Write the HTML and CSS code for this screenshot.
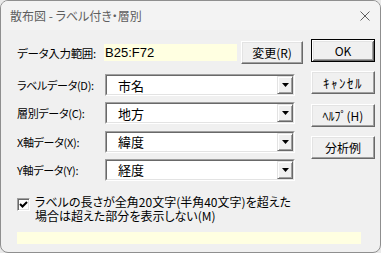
FILE: index.html
```html
<!DOCTYPE html>
<html lang="ja">
<head>
    <meta charset="UTF-8">
    <meta name="viewport" content="width=device-width, initial-scale=1.0">
    <title>散布図 - ラベル付き・層別</title>
    <link rel="stylesheet" href="styles.css">
</head>
<body>
    <div class="window">
        <div class="titlebar">
            <span class="title">散布図 - ラベル付き・層別</span>
            <svg class="close" width="10" height="10" viewBox="0 0 10 10">
                <path d="M0.5 0.5 L9.5 9.5 M9.5 0.5 L0.5 9.5" stroke="#5f5f5f" stroke-width="1" fill="none"/>
            </svg>
        </div>
        <div class="content">
            <div class="main">
                <div class="form">
                    <div class="range-row">
                        <span class="label range-label">データ入力範囲:</span>
                        <div class="range-field">B25:F72</div>
                        <button class="btn btn-change">変更(R)</button>
                    </div>
                    <div class="combo-row first">
                        <span class="label">ラベルデータ(D):</span>
                        <div class="combo">
                            <div class="combo-inner">
                                <span class="combo-text">市名</span>
                                <span class="combo-btn"><svg width="7" height="4" viewBox="0 0 7 4"><path d="M0 0h7l-3.5 4z" fill="#000"/></svg></span>
                            </div>
                        </div>
                    </div>
                    <div class="combo-row">
                        <span class="label">層別データ(C):</span>
                        <div class="combo">
                            <div class="combo-inner">
                                <span class="combo-text">地方</span>
                                <span class="combo-btn"><svg width="7" height="4" viewBox="0 0 7 4"><path d="M0 0h7l-3.5 4z" fill="#000"/></svg></span>
                            </div>
                        </div>
                    </div>
                    <div class="combo-row">
                        <span class="label">X軸データ(X):</span>
                        <div class="combo">
                            <div class="combo-inner">
                                <span class="combo-text">緯度</span>
                                <span class="combo-btn"><svg width="7" height="4" viewBox="0 0 7 4"><path d="M0 0h7l-3.5 4z" fill="#000"/></svg></span>
                            </div>
                        </div>
                    </div>
                    <div class="combo-row">
                        <span class="label">Y軸データ(Y):</span>
                        <div class="combo">
                            <div class="combo-inner">
                                <span class="combo-text">経度</span>
                                <span class="combo-btn"><svg width="7" height="4" viewBox="0 0 7 4"><path d="M0 0h7l-3.5 4z" fill="#000"/></svg></span>
                            </div>
                        </div>
                    </div>
                </div>
                <div class="buttons">
                    <button class="btn btn-default">OK</button>
                    <button class="btn btn-cancel">ｷｬﾝｾﾙ</button>
                    <button class="btn">ﾍﾙﾌﾟ(H)</button>
                    <button class="btn">分析例</button>
                </div>
            </div>
            <div class="check-row">
                <span class="checkbox">
                    <svg width="9" height="9" viewBox="0 0 9 9">
                        <path d="M1 4 L3.5 6.5 L8 2" stroke="#000" stroke-width="2" fill="none"/>
                    </svg>
                </span>
                <span class="check-text">ラベルの長さが全角20文字(半角40文字)を超えた<br>場合は超えた部分を表示しない(M)</span>
            </div>
            <div class="status-bar"></div>
        </div>
    </div>
</body>
</html>
```

FILE: styles.css
```css
body {
    margin: 0;
    background: #e9e9e9;
    font-family: "Noto Sans CJK JP", "Liberation Sans", sans-serif;
    color: #000;
}
.window {
    width: 381px;
    height: 253px;
    box-sizing: border-box;
    border: 1px solid #8f8f8f;
    border-radius: 8px;
    background: #f0f0f0;
    overflow: hidden;
}
.titlebar {
    height: 29px;
    background: #f3f3f3;
    display: flex;
    align-items: center;
    justify-content: space-between;
    padding: 0 10px 0 9px;
}
.title {
    font-size: 12px;
    color: #5e5e5e;
    font-feature-settings: "palt";
}
.content {
    padding: 9px 5px 0 16px;
}
.main {
    display: flex;
    align-items: flex-start;
}
.form {
    width: 286px;
    padding-top: 2px;
}
.label {
    font-size: 11px;
    letter-spacing: -0.3px;
    width: 88px;
    flex: none;
    font-feature-settings: "palt";
    white-space: nowrap;
}
.range-label {
    width: 87px;
    font-size: 11.5px;
}
.range-row {
    display: flex;
    align-items: center;
    height: 23px;
}
.range-field {
    width: 133px;
    height: 17px;
    line-height: 17px;
    margin-right: 4px;
    padding-left: 1px;
    box-sizing: border-box;
    background: #ffffe1;
    font-family: "Liberation Sans", sans-serif;
    font-size: 13px;
}
.btn {
    box-sizing: border-box;
    width: 64px;
    height: 23px;
    padding: 0;
    background: #f0f0f0;
    border: 1px solid;
    border-color: #ffffff #696969 #696969 #ffffff;
    box-shadow: inset -1px -1px #a0a0a0, inset 1px 1px #e3e3e3;
    font-family: "Noto Sans CJK JP", sans-serif;
    font-size: 12px;
    color: #000;
}
.btn-change {
    width: 62px;
}
.btn-default {
    border-color: #000;
    box-shadow: inset 1px 1px #fff, inset -1px -1px #696969, inset 2px 2px #e3e3e3, inset -2px -2px #a0a0a0;
}
.btn-cancel {
    font-size: 13px;
    letter-spacing: 1.5px;
}
.combo-row {
    display: flex;
    align-items: center;
    height: 22px;
    margin-top: 6.33px;
}
.combo-row.first {
    margin-top: 10px;
}
.combo {
    width: 190px;
    height: 22px;
    box-sizing: border-box;
    border: 1px solid;
    border-color: #a0a0a0 #ffffff #ffffff #a0a0a0;
}
.combo-inner {
    height: 100%;
    box-sizing: border-box;
    border: 1px solid;
    border-color: #696969 #e3e3e3 #e3e3e3 #696969;
    background: #fff;
    display: flex;
    align-items: center;
}
.combo-text {
    flex: 1;
    padding-left: 11px;
    font-size: 13px;
}
.combo-btn {
    width: 16px;
    height: 18px;
    box-sizing: border-box;
    background: #f0f0f0;
    border: 1px solid;
    border-color: #e3e3e3 #696969 #696969 #e3e3e3;
    box-shadow: inset 1px 1px #fff, inset -1px -1px #a0a0a0;
    display: flex;
    align-items: center;
    justify-content: center;
}
.buttons {
    margin-left: 8px;
    display: flex;
    flex-direction: column;
    gap: 9.33px;
}
.check-row {
    display: flex;
    align-items: flex-start;
    margin-top: 14px;
}
.checkbox {
    width: 13px;
    height: 13px;
    box-sizing: border-box;
    margin-top: 3px;
    margin-right: 5px;
    background: #fff;
    border: 1px solid;
    border-color: #a0a0a0 #fff #fff #a0a0a0;
    box-shadow: inset 1px 1px #696969, inset -1px -1px #e3e3e3;
    display: flex;
    align-items: center;
    justify-content: center;
}
.check-text {
    font-size: 12px;
    line-height: 14px;
    font-feature-settings: "palt";
}
.status-bar {
    width: 344px;
    height: 12px;
    margin-top: 9px;
    background: #ffffe1;
}
```
